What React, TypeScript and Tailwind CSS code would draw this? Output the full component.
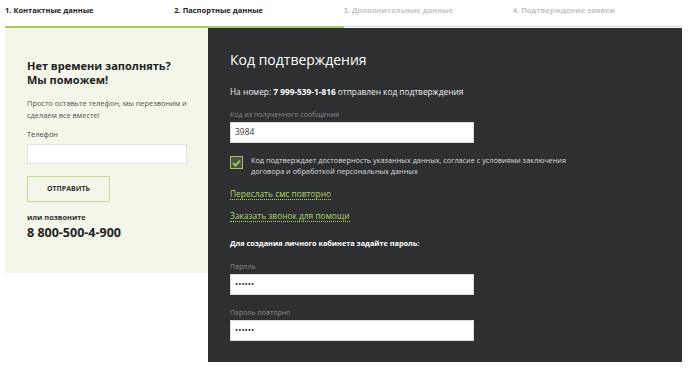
const Step = ({ label, done }: { label: string; done: boolean }) => (
  <div className="flex flex-col">
    <div className={`h-[26px] pt-[5px] text-[7.5px] leading-[10px] font-bold ${done ? "text-[#222]" : "text-[#c4c4c4]"}`}>{label}</div>
    <div className={done ? "h-[2px] bg-[#a9cc5c]" : "h-[2px] border-t border-[#d6d6d6]"} />
  </div>
);

const Field = ({ label, value }: { label: string; value: string }) => (
  <div className="flex flex-col">
    <div className="text-[7px] leading-[10px] text-[#8a8a8a] mb-[2px]">{label}</div>
    <div className="w-[244px] h-[21px] bg-white border border-[#ddd] flex items-center px-[4px] text-[8.5px] text-[#333]">
      {value}
    </div>
  </div>
);

const App = () => {
  return (
    <div className="w-[700px] h-[370px] bg-white font-['Open_Sans',sans-serif] overflow-hidden">
      <div className="ml-[5px] w-[677px]">
        <div className="grid grid-cols-4">
          <Step label="1. Контактные данные" done />
          <Step label="2. Паспортные данные" done />
          <Step label="3. Дополнительные данные" done={false} />
          <Step label="4. Подтверждение заявки" done={false} />
        </div>

        <div className="flex items-start">
          {/* left help panel */}
          <div className="w-[203px] h-[245px] bg-[#f3f6e9] pl-[22px] pt-[31px]">
            <div className="text-[11px] leading-[14px] font-bold text-[#222]">
              Нет времени заполнять?
              <br />
              Мы поможем!
            </div>
            <div className="mt-[10px] text-[7.4px] leading-[12px] text-[#555]">
              Просто оставьте телефон, мы перезвоним и
              <br />
              сделаем все вместе!
            </div>
            <div className="mt-[8px] text-[7.4px] leading-[11px] text-[#444]">Телефон</div>
            <div className="mt-[4px] w-[160px] h-[20px] bg-white border border-[#e2e2e2]" />
            <div className="mt-[12px] w-[83px] h-[26px] border border-[#c6db8e] flex items-center justify-center text-[7px] font-bold text-[#333]">
              ОТПРАВИТЬ
            </div>
            <div className="mt-[10px] text-[7.4px] leading-[11px] font-bold text-[#333]">или позвоните</div>
            <div className="mt-[2px] text-[12.5px] leading-[16px] font-bold text-[#222]">8 800-500-4-900</div>
          </div>

          {/* confirmation panel */}
          <div className="w-[474px] h-[334px] bg-[#2e2f31] pl-[22px] pt-[22px] text-white">
            <div className="text-[14px] leading-[20px]">Код подтверждения</div>
            <div className="mt-[16px] text-[8.3px] leading-[12px] text-[#eee]">
              На номер: <span className="font-bold text-white">7 999-539-1-816</span> отправлен код подтверждения
            </div>
            <div className="mt-[12px]">
              <Field label="Код из полученного сообщения" value="3984" />
            </div>
            <div className="mt-[12px] flex items-start gap-[8px]">
              <div className="w-[13px] h-[13px] mt-[1px] border border-[#a3c45a] bg-[#4b4d4f] flex items-center justify-center">
                <svg width="9" height="8" viewBox="0 0 9 8">
                  <path d="M1 4 L3.5 6.5 L8 1.5" stroke="#8fc940" strokeWidth="2" fill="none" />
                </svg>
              </div>
              <div className="text-[7.3px] leading-[11px] text-[#ddd]">
                Код подтверждает достоверность указанных данных, согласие с условиями заключения
                <br />
                договора и обработкой персональных данных
              </div>
            </div>
            <div className="mt-[10px] text-[8.4px] leading-[13px]">
              <span className="text-[#b0d36b] border-b border-dotted border-[#b0d36b]">Переслать смс повторно</span>
            </div>
            <div className="mt-[9px] text-[8.4px] leading-[13px]">
              <span className="text-[#b0d36b] border-b border-dotted border-[#b0d36b]">Заказать звонок для помощи</span>
            </div>
            <div className="mt-[16px] text-[7.3px] leading-[11px] font-bold text-white">
              Для создания личного кабинета задайте пароль:
            </div>
            <div className="mt-[13px]">
              <Field label="Пароль" value="••••••" />
            </div>
            <div className="mt-[13px]">
              <Field label="Пароль повторно" value="••••••" />
            </div>
          </div>
        </div>
      </div>
    </div>
  );
};

export default App;
